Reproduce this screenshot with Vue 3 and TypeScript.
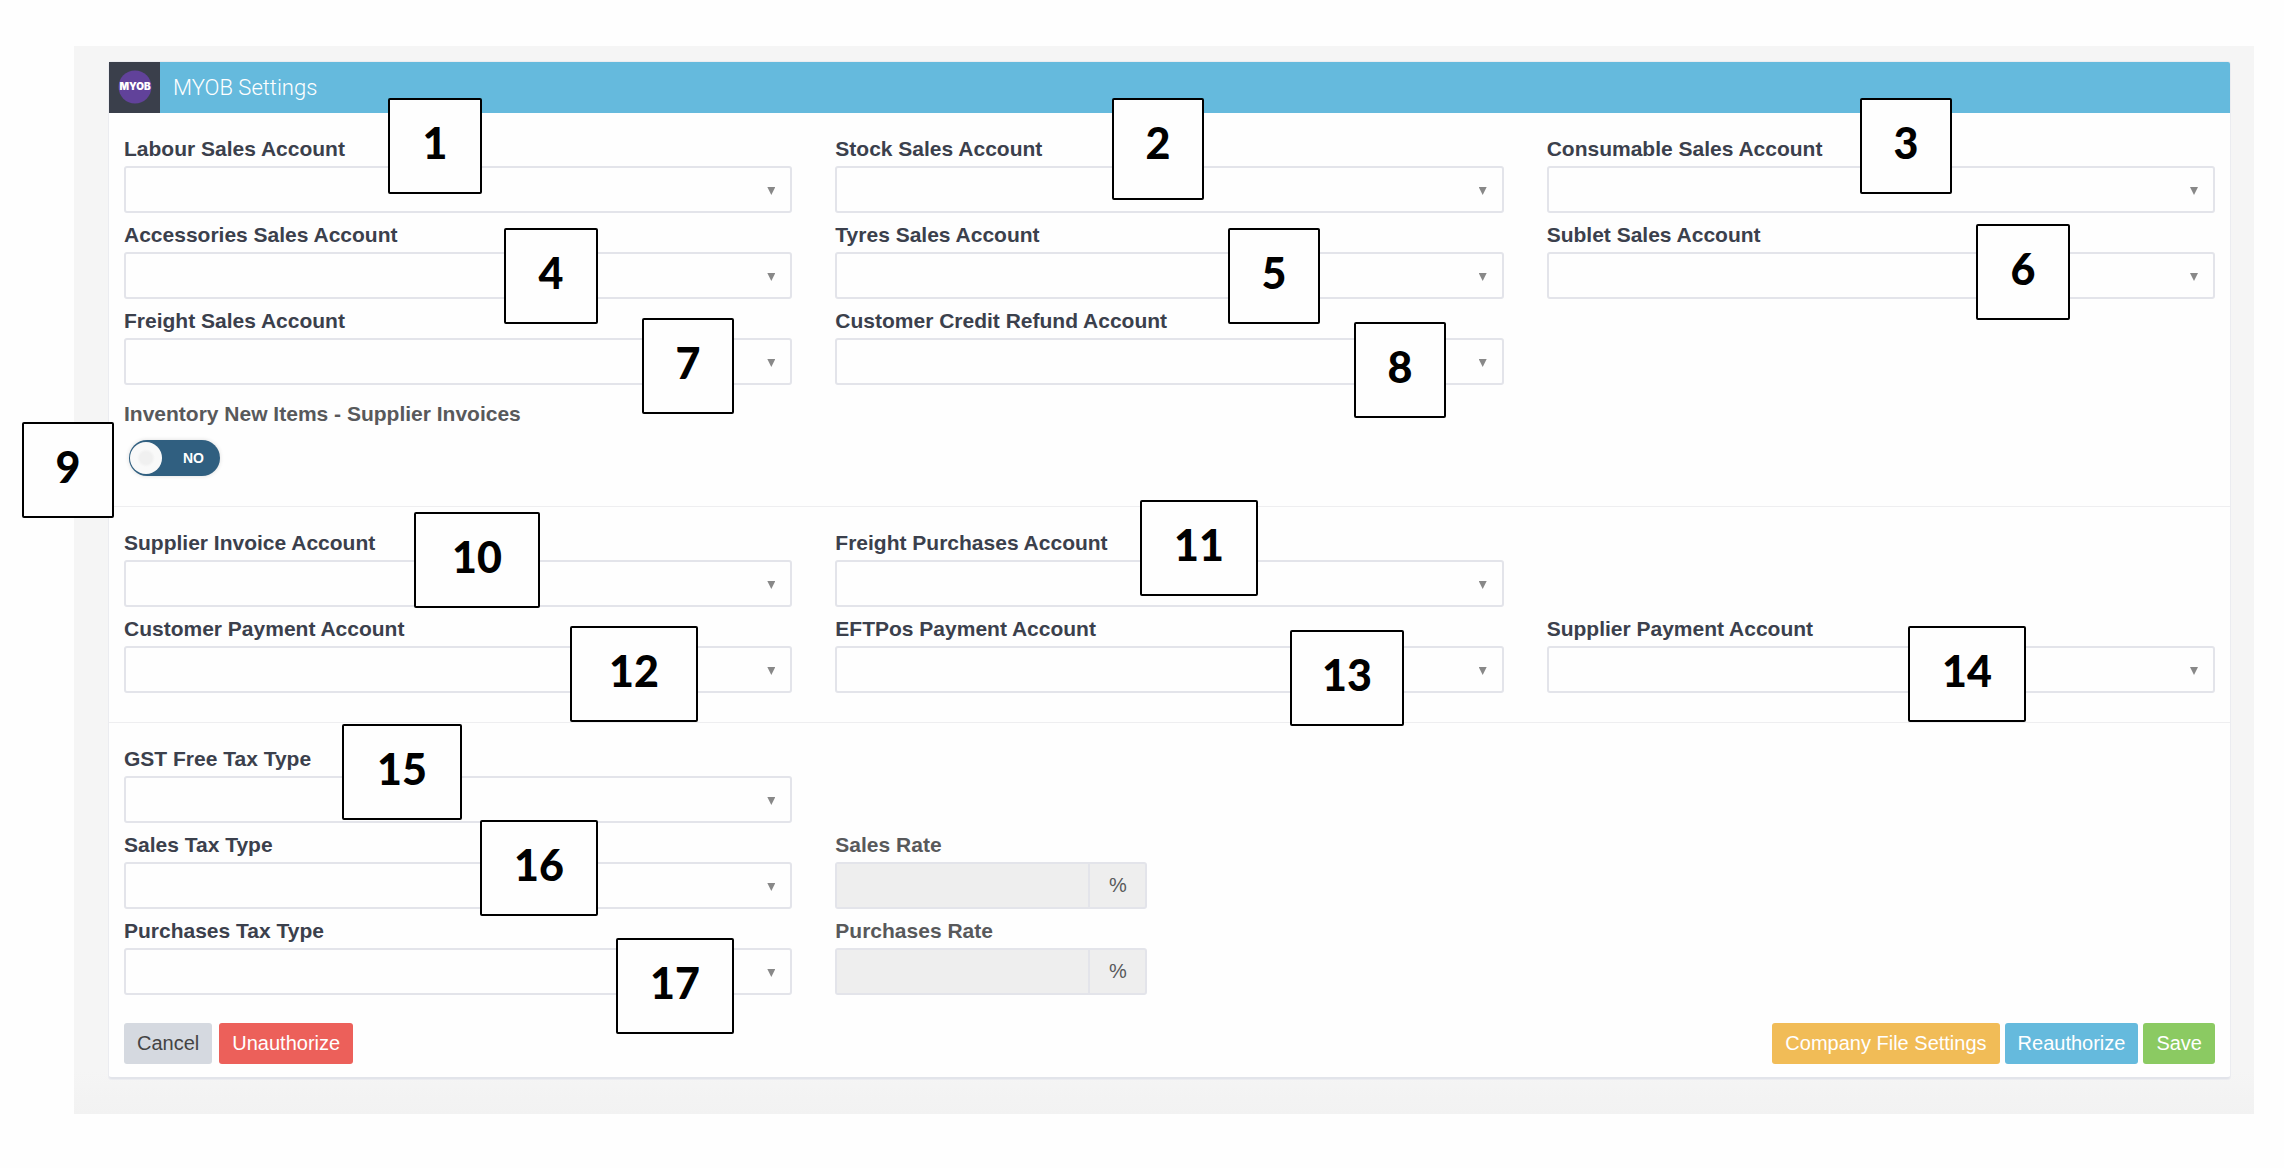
<script setup lang="ts">
import { ref } from 'vue'

interface Field {
  id: string
  label: string
}

interface Marker {
  n: number
  x: number
  y: number
  w: number
  h: number
}

const salesFields: Field[] = [
  { id: 'labour-sales', label: 'Labour Sales Account' },
  { id: 'stock-sales', label: 'Stock Sales Account' },
  { id: 'consumable-sales', label: 'Consumable Sales Account' },
  { id: 'accessories-sales', label: 'Accessories Sales Account' },
  { id: 'tyres-sales', label: 'Tyres Sales Account' },
  { id: 'sublet-sales', label: 'Sublet Sales Account' },
  { id: 'freight-sales', label: 'Freight Sales Account' },
  { id: 'credit-refund', label: 'Customer Credit Refund Account' },
]

const purchaseFields: Field[] = [
  { id: 'supplier-invoice', label: 'Supplier Invoice Account' },
  { id: 'freight-purchases', label: 'Freight Purchases Account' },
]

const paymentFields: Field[] = [
  { id: 'customer-payment', label: 'Customer Payment Account' },
  { id: 'eftpos-payment', label: 'EFTPos Payment Account' },
  { id: 'supplier-payment', label: 'Supplier Payment Account' },
]

const taxRows: { tax: Field; rate?: Field }[] = [
  { tax: { id: 'gst-free', label: 'GST Free Tax Type' } },
  { tax: { id: 'sales-tax', label: 'Sales Tax Type' }, rate: { id: 'sales-rate', label: 'Sales Rate' } },
  { tax: { id: 'purchases-tax', label: 'Purchases Tax Type' }, rate: { id: 'purchases-rate', label: 'Purchases Rate' } },
]

// Guide numbers laid over the form; x is on a 2284-unit wide canvas.
const canvas = 2284
const markers: Marker[] = [
  { n: 1, x: 388, y: 98, w: 94, h: 96 },
  { n: 2, x: 1112, y: 98, w: 92, h: 102 },
  { n: 3, x: 1860, y: 98, w: 92, h: 96 },
  { n: 4, x: 504, y: 228, w: 94, h: 96 },
  { n: 5, x: 1228, y: 228, w: 92, h: 96 },
  { n: 6, x: 1976, y: 224, w: 94, h: 96 },
  { n: 7, x: 642, y: 318, w: 92, h: 96 },
  { n: 8, x: 1354, y: 322, w: 92, h: 96 },
  { n: 9, x: 22, y: 422, w: 92, h: 96 },
  { n: 10, x: 414, y: 512, w: 126, h: 96 },
  { n: 11, x: 1140, y: 500, w: 118, h: 96 },
  { n: 12, x: 570, y: 626, w: 128, h: 96 },
  { n: 13, x: 1290, y: 630, w: 114, h: 96 },
  { n: 14, x: 1908, y: 626, w: 118, h: 96 },
  { n: 15, x: 342, y: 724, w: 120, h: 96 },
  { n: 16, x: 480, y: 820, w: 118, h: 96 },
  { n: 17, x: 616, y: 938, w: 118, h: 96 },
]

const markerStyle = (m: Marker) => ({
  left: `${(m.x / canvas) * 100}%`,
  top: `${m.y}px`,
  width: `${m.w}px`,
  height: `${m.h}px`,
})

const inventoryNewItems = ref(false)
</script>

<template>
  <div class="page">
    <main class="frame">
      <form class="panel" @submit.prevent>
        <header class="panel-head">
          <div class="brand">
            <svg width="34" height="34" viewBox="0 0 34 34" role="img" aria-label="MYOB">
              <circle cx="17" cy="17" r="16.5" fill="#61429a" />
              <text x="17" y="20" text-anchor="middle" class="brand-text">MYOB</text>
            </svg>
          </div>
          <h1>MYOB Settings</h1>
        </header>

        <section class="section">
          <div class="grid">
            <div v-for="f in salesFields" :key="f.id" class="field">
              <label :for="f.id">{{ f.label }}</label>
              <div class="select"><select :id="f.id"><option value=""></option></select></div>
            </div>
          </div>
          <div class="toggle-field">
            <label for="inventory-new" class="muted">Inventory New Items - Supplier Invoices</label>
            <div class="toggle">
              <input id="inventory-new" v-model="inventoryNewItems" type="checkbox" role="switch" />
              <span class="toggle-text">{{ inventoryNewItems ? 'YES' : 'NO' }}</span>
            </div>
          </div>
        </section>

        <section class="section">
          <div class="grid">
            <div v-for="f in purchaseFields" :key="f.id" class="field">
              <label :for="f.id">{{ f.label }}</label>
              <div class="select"><select :id="f.id"><option value=""></option></select></div>
            </div>
          </div>
          <div class="grid">
            <div v-for="f in paymentFields" :key="f.id" class="field">
              <label :for="f.id">{{ f.label }}</label>
              <div class="select"><select :id="f.id"><option value=""></option></select></div>
            </div>
          </div>
        </section>

        <section class="section last">
          <div v-for="row in taxRows" :key="row.tax.id" class="grid">
            <div class="field">
              <label :for="row.tax.id">{{ row.tax.label }}</label>
              <div class="select"><select :id="row.tax.id"><option value=""></option></select></div>
            </div>
            <div v-if="row.rate" class="field">
              <label :for="row.rate.id" class="muted">{{ row.rate.label }}</label>
              <div class="rate">
                <input :id="row.rate.id" type="text" disabled />
                <span class="addon">%</span>
              </div>
            </div>
          </div>
        </section>

        <footer class="actions">
          <div class="group start">
            <button type="button" class="btn default">Cancel</button>
            <button type="button" class="btn danger">Unauthorize</button>
          </div>
          <div class="group">
            <button type="button" class="btn warning">Company File Settings</button>
            <button type="button" class="btn info">Reauthorize</button>
            <button type="submit" class="btn success">Save</button>
          </div>
        </footer>
      </form>
    </main>

    <div v-for="m in markers" :key="m.n" class="marker" :style="markerStyle(m)">{{ m.n }}</div>
  </div>
</template>

<style>
body {
  margin: 0;
  background: #fefefe;
}
</style>

<style scoped>
.page {
  position: relative;
  padding: 46px 30px 54px 74px;
  font-family: "Liberation Sans", Arial, sans-serif;
  font-size: 20px;
  color: #3b404c;
}
.page * {
  box-sizing: border-box;
}
.frame {
  padding: 16px 24px 35px 35px;
  background: linear-gradient(#f5f5f5 96%, #f2f2f2);
}
.panel {
  background: #fefefe;
  border-bottom: 2px solid #e2e4ea;
  border-radius: 3px;
  box-shadow: 0 0 0 1px #ebecf0;
}
.panel-head {
  display: flex;
  align-items: center;
  height: 51px;
  background: #65badd;
  border-radius: 2px 2px 0 0;
}
.brand {
  display: flex;
  align-items: center;
  justify-content: center;
  width: 51px;
  height: 51px;
  padding-bottom: 2px;
  background: #3a3f4b;
}
.brand-text {
  font: 900 10px Inter, sans-serif;
  fill: #fff;
}
h1 {
  margin: 0 0 0 13px;
  padding-top: 1px;
  font-family: Roboto, "Liberation Sans", sans-serif;
  font-size: 22px;
  font-weight: 300;
  line-height: 28px;
  color: #fff;
}
.section {
  display: flex;
  flex-direction: column;
  gap: 10px;
  padding: 24px 15px 29px;
  border-bottom: 1px solid #eeeef0;
}
.section.last {
  padding-bottom: 28px;
  border-bottom: 0;
}
.grid {
  display: grid;
  grid-template-columns: repeat(3, minmax(0, 1fr));
  gap: 10px 43px;
}
label {
  display: block;
  margin-bottom: 6px;
  font-size: 21px;
  font-weight: 700;
  line-height: 23px;
}
.muted {
  color: #58595b;
}
.select {
  position: relative;
}
.select::after {
  content: "";
  position: absolute;
  top: 21px;
  right: 17px;
  width: 8px;
  height: 8px;
  background: #888;
  clip-path: polygon(0 0, 100% 0, 50% 100%);
  pointer-events: none;
}
select {
  display: block;
  appearance: none;
  width: 100%;
  height: 47px;
  padding: 0 40px 0 12px;
  border: 2px solid #e3e4ea;
  border-radius: 3px;
  background: #fefefe;
  font: inherit;
  color: inherit;
}
.toggle-field {
  padding: 7px 0 1px;
}
.toggle-field label {
  margin-bottom: 15px;
}
.toggle {
  position: relative;
  width: 91px;
  margin-left: 5px;
}
.toggle input {
  display: flex;
  align-items: center;
  appearance: none;
  width: 91px;
  height: 36px;
  margin: 0;
  padding: 0 1px;
  border-radius: 18px;
  background: #305f80;
  box-shadow: 0 0 4px #ddd;
}
.toggle input::before {
  content: "";
  width: 32px;
  height: 32px;
  border-radius: 50%;
  background: radial-gradient(circle, #f0f0f0 0 6px, #f9f9f9 9px);
}
.toggle input:checked::before {
  margin-left: auto;
}
.toggle-text {
  position: absolute;
  top: 0;
  right: 16px;
  font-size: 14px;
  font-weight: 700;
  line-height: 36px;
  color: #fff;
  pointer-events: none;
}
.toggle input:checked + .toggle-text {
  right: auto;
  left: 16px;
}
.rate {
  display: flex;
  width: 312px;
  height: 47px;
  border: 2px solid #e3e4ea;
  border-radius: 3px;
  background: #eee;
}
.rate input {
  flex: 1;
  min-width: 0;
  padding: 0 12px;
  border: 0;
  border-right: 2px solid #e3e4ea;
  background: #eee;
  font: inherit;
}
.addon {
  width: 55px;
  line-height: 43px;
  text-align: center;
  color: #58595b;
}
.actions {
  display: flex;
  justify-content: space-between;
  padding: 0 15px 13px;
}
.group {
  display: flex;
  gap: 5px;
}
.group.start {
  gap: 7px;
}
.btn {
  height: 41px;
  padding: 0 13px;
  border: 0;
  border-radius: 3px;
  font: inherit;
  line-height: 41px;
  color: #fff;
}
.default {
  background: #d5d9e0;
  color: #444;
}
.danger {
  background: #ec605a;
}
.warning {
  background: #f1bc57;
}
.info {
  background: #65badd;
}
.success {
  background: #8bca62;
}
.marker {
  position: absolute;
  box-sizing: border-box;
  padding-top: 17px;
  border: 2px solid #000;
  border-radius: 2px;
  background: #fefefe;
  font-family: Lato, "Open Sans", sans-serif;
  font-size: 43px;
  font-weight: 900;
  line-height: 52px;
  text-align: center;
  color: #000;
}
</style>
